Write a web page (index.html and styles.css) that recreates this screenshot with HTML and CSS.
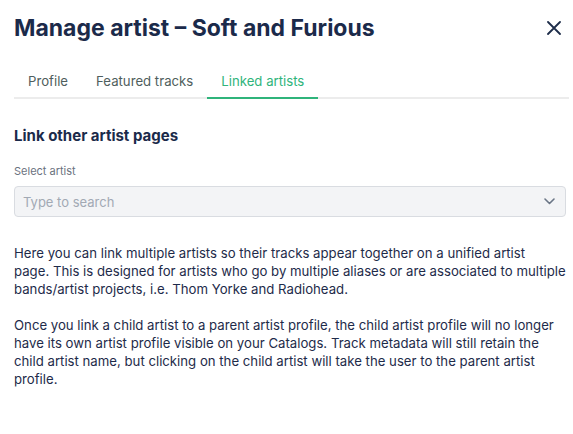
FILE: index.html
```html
<!DOCTYPE html>
<html>
<head>
<meta charset="utf-8">
<link rel="stylesheet" href="styles.css">
</head>
<body>
<div class="modal">
  <div class="header">
    <h1 class="title">Manage artist – Soft and Furious</h1>
    <button class="close" aria-label="Close">
      <svg width="14" height="14" viewBox="0 0 14 14"><path d="M1 1L13 13M13 1L1 13" stroke="#1e2d4a" stroke-width="1.8" stroke-linecap="round"/></svg>
    </button>
  </div>
  <div class="tabs">
    <div class="tab">Profile</div>
    <div class="tab">Featured tracks</div>
    <div class="tab active">Linked artists</div>
  </div>
  <h2 class="section">Link other artist pages</h2>
  <label class="label">Select artist</label>
  <div class="select">
    <span class="placeholder">Type to search</span>
    <svg class="chev" width="11" height="7" viewBox="0 0 11 7"><path d="M1 1l4.5 4.5L10 1" fill="none" stroke="#6b7686" stroke-width="1.6" stroke-linecap="round" stroke-linejoin="round"/></svg>
  </div>
  <p class="text">Here you can link multiple artists so their tracks appear together on a unified artist<br>page. This is designed for artists who go by multiple aliases or are associated to multiple bands/artist projects, i.e. Thom Yorke and Radiohead.</p>
  <p class="text">Once you link a child artist to a parent artist profile, the child artist profile will no longer have its own artist profile visible on your Catalogs. Track metadata will still retain the child artist name, but clicking on the child artist will take the user to the parent artist profile.</p>
</div>
</body>
</html>
```
FILE: styles.css
```css
html, body {
  margin: 0;
  padding: 0;
  background: #ffffff;
}
body {
  font-family: Inter, "Open Sans", sans-serif;
  color: #1e2b4a;
}
.modal {
  width: 555px;
  padding: 0 4px 0 14px;
}
.header {
  display: flex;
  align-items: center;
  justify-content: space-between;
  height: 56px;
}
.title {
  margin: 0;
  font-size: 23px;
  font-weight: 700;
  color: #1b2a4a;
  letter-spacing: 0;
}
.close {
  background: none;
  border: 0;
  padding: 0;
  margin-right: 8px;
  width: 14px;
  height: 14px;
  display: flex;
}
.tabs {
  display: flex;
  margin-top: 14px;
  border-bottom: 2px solid #ececec;
}
.tab {
  padding: 0 14px;
  height: 27px;
  line-height: 22px;
  font-size: 13.2px;
  color: #4f5e5d;
  margin-bottom: -2px;
  border-bottom: 2px solid transparent;
}
.tab.active {
  color: #2fb47b;
  border-bottom-color: #2fb47b;
}
.section {
  margin: 27px 0 0;
  font-size: 15px;
  font-weight: 700;
  color: #1b2a4a;
  line-height: 20px;
}
.label {
  display: block;
  margin-top: 18px;
  font-size: 11px;
  color: #6b7280;
  line-height: 14px;
}
.select {
  margin-top: 8px;
  width: 550px;
  height: 29px;
  box-sizing: content-box;
  border: 1px solid #d9dce1;
  border-radius: 4px;
  background: #f3f4f6;
  display: flex;
  align-items: center;
  justify-content: space-between;
  padding: 0;
}
.placeholder {
  margin-left: 8px;
  font-size: 13px;
  color: #a2a9b4;
}
.chev {
  margin-right: 10px;
}
.text {
  margin: 27px 0 0;
  width: 557px;
  font-size: 13.2px;
  line-height: 18px;
  color: #1e2b4a;
}
.text + .text {
  margin-top: 18px;
}
```
